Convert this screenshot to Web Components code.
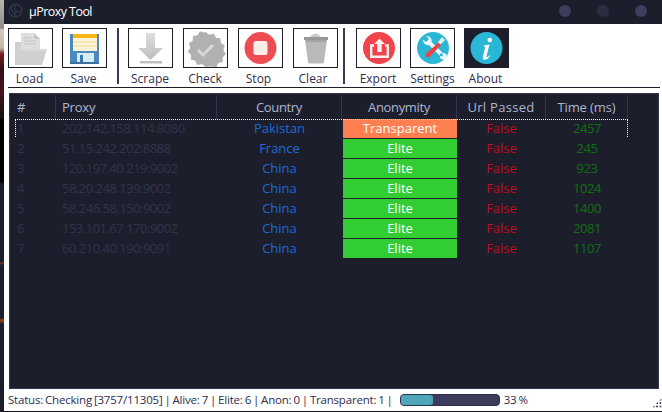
<!DOCTYPE html>
<html lang="en"><head><meta charset="utf-8"><title>µProxy Tool</title>
<style>
html,body{margin:0;padding:0;width:662px;height:412px;overflow:hidden;background:#1c1e2c;font-family:"Open Sans","Noto Sans",sans-serif}
</style></head><body>
<proxy-app></proxy-app>
<script>
const ICONS={
load:`<path d="M13 5h13l6 6v12H13z" fill="#dedede"/><path d="M26 5v6h6z" fill="#c6c6c6"/><path d="M16 10h7M16 13h12M16 16h12" stroke="#c4c4c4"/><path d="M7 37V14h6v7h26l-5 16z" fill="#cfcfcf"/><path d="M12 21h27l-1 2H12z" fill="#d9d9d9"/>`,
save:`<path d="M8 6h29v29l-1 1H8z" fill="#4d88bf"/><path d="M11 6h24v4H11z" fill="#f4b518"/><path d="M11 10h24v13H11z" fill="#faf3dc"/><path d="M11 14h24M11 18h24" stroke="#f6d77e"/><path d="M15 25h17v11H15z" fill="#d5eef2"/><path d="M18 27h3v7h-3z" fill="#3a78b4"/><path d="M8 34h29v2H8z" fill="#3d6fa3"/>`,
scrape:`<defs><linearGradient id="g" x1="0" y1="0" x2="0" y2="1"><stop offset="0" stop-color="#dedede"/><stop offset="1" stop-color="#bdbdbd"/></linearGradient></defs><path d="M18 5h9v15h8L22.500 32 10 20h8z" fill="url(#g)"/><path d="M12 33h22v2.500H12z" fill="#bfbfbf"/>`,
check:`<path d="M22.500 4l3.800 2.800 4.500-1.200 2.200 4.100 4.600.7.300 4.700 3.900 2.600-1.500 4.400 2.500 4-3.300 3.300.3 4.600-4.500 1.100-2 4.200-4.600-.9L22.500 39l-3.600-3-4.600.9-2-4.200-4.500-1.100.3-4.600-3.300-3.300 2.500-4-1.500-4.400 3.900-2.600.3-4.700 4.600-.7 2.200-4.100 4.500 1.200z" fill="#b1b1b1"/><path d="M15 22l5 5 10-10" fill="none" stroke="#d9d9d9" stroke-width="3"/>`,
stop:`<circle cx="22.500" cy="20" r="16" fill="#ec4c52"/><rect x="15.500" y="13" width="14" height="14" rx="2.500" fill="#fcecec"/>`,
clear:`<path d="M19 7q3.500-3 7 0l3 3H16z" fill="#c9c9c9"/><path d="M11 9h24v3H11z" fill="#979797"/><path d="M12 12h22l-3 22q-.3 1.500-2 1.500H17q-1.700 0-2-1.500z" fill="#b9b9b9"/><path d="M13 12h20l-.3 2H13.300z" fill="#a3a3a3"/>`,
export:`<circle cx="23" cy="20" r="16" fill="#ef444b"/><path d="M23.500 10.500l5.500 5.500h-3.300v8h-4.400v-8H18z" fill="#fdeeee"/><path d="M18 17.500h-2.800v11.300h16.600V17.500H29" fill="none" stroke="#fdeeee" stroke-width="2.400"/>`,
settings:`<circle cx="23" cy="20" r="16" fill="#2ab7d6"/><path d="M13 11.500a5 5 0 0 0 6 5.500L30 28a3.300 3.300 0 1 0 3-3L21.500 14a5 5 0 0 0-5.500-6l3 3-3 3z" fill="#eef6f8"/><circle cx="31.300" cy="26.800" r="1.600" fill="#2ab7d6"/><path d="M32 9l3 3-5 5-2.500-2z" fill="#e8eef0"/><path d="M28.500 14.500l2.500 2.500-11 11.500q-2 1.800-3.700.2-1.500-1.800.4-3.700z" fill="#ec4349"/>`,
about:`<circle cx="22.500" cy="20" r="16" fill="#2ab7d6"/><circle cx="25.800" cy="12" r="2.300" fill="#fff"/><path d="M20 17.500l5.500-1-3 11.500q-.3 1.400.7 1.200 1-.3 2.300-1.900l.7.500q-2.500 3.700-5 4-3 .2-2.300-3l2.200-9.200q.2-1.200-1.800-1z" fill="#fff"/>`
};
function def(name,css,html){
  customElements.define(name,class extends HTMLElement{
    constructor(){super();const r=this.attachShadow({mode:'open'});r.innerHTML=`<style>${css}</style>${typeof html==='function'?html(this):html}`;}
  });
}
def('title-bar',`:host{display:flex;align-items:center;height:24px;background:#1c1e2c;color:#fff;box-sizing:border-box;padding-left:4px;font-size:12.500px}
svg{flex:none;width:15px;height:15px;margin:0 6px 3px 0}
.t{flex:1;letter-spacing:-.55px;margin-bottom:2px}
i{flex:none;width:12px;height:12px;border-radius:50%;background:#3d3d5c;margin:0 26px 2px 0}
i.m{background:#2c2c42}i:last-child{margin-right:15px}`,
`<svg viewBox="0 0 16 16" fill="none" stroke="#34364a" stroke-width="1.300"><circle cx="8" cy="8" r="6.800"/><path d="M4 3c-1 4 1 8 5 9.500M8 2c-2 3-1 6 1 7s5 0 5.500-2M7 14c0-3 1-4 2-5"/></svg><span class="t">µProxy Tool</span><i></i><i class="m"></i><i></i>`);
def('tool-button',`:host{display:flex;flex-direction:column;align-items:center;width:45px;flex:none;color:#2e2e4e;font-size:12px;line-height:16px}
.b{box-sizing:border-box;width:45px;height:40px;border:1px solid #1c1e2c;background:#fff}
:host([active]) .b{background:#1c1e2c}
svg{display:block;width:45px;height:40px;margin:-1px}
.l{margin-top:3px;white-space:nowrap;padding-right:var(--nudge,0)}`,
h=>`<div class="b"><svg viewBox="0 0 45 40">${ICONS[h.getAttribute('icon')]}</svg></div><div class="l"><slot></slot></div>`);
def('tool-sep',`:host{display:block;flex:none;width:2px;height:56px;background:#3a3a55}`,'');
def('tool-bar',`:host{display:flex;align-items:flex-start;box-sizing:border-box;height:63px;padding:4px 4px 0 4px;background:#fff}`,`<slot></slot>`);
def('grid-row',`:host{display:grid;grid-template-columns:41px 161px 125px 115px 89px 82px;height:19px;margin-bottom:1px;line-height:19px;font-size:13px;text-align:center;position:relative}
.a{text-align:left;padding-left:2px;color:#32344a}
.p{text-align:left;padding-left:6px;color:#32344a;white-space:nowrap;letter-spacing:-.5px}
.c{color:#1f69d6}
.an{margin-left:1px;color:#fff;background:#32cd32}
:host([kind=Transparent]) .an{background:#ff7f50}
.f{color:#c00d1e}.ms{color:#107010;letter-spacing:-.4px}
.o{display:none}
:host([focus]) .o{display:block;position:absolute;left:0;top:0;width:611px;height:17px;border:1px dotted #fff;border-bottom:0;pointer-events:none}`,
h=>{const g=k=>h.getAttribute(k);return `<div class="a">${g('n')}</div><div class="p">${g('proxy')}</div><div class="c">${g('country')}</div><div class="an">${g('kind')}</div><div class="f">False</div><div class="ms">${g('ms')}</div><div class="o"></div>`});
def('proxy-grid',`:host{display:block;box-sizing:border-box;margin:5px 3px 0 5px;height:296px;background:#1c1e2c;border:1px solid #34364e;padding:1px 0 0 5px;overflow:hidden}
.h{display:grid;grid-template-columns:41px 161px 125px 115px 89px 82px;height:24px;line-height:24px;font-size:13px;color:#aeb6cf;text-align:center}
.h div{border-right:1px solid #34364e;box-sizing:border-box;white-space:nowrap}
.h .a{text-align:left;padding-left:2px}.h .p{text-align:left;padding-left:6px;letter-spacing:-.2px}`,
`<div class="h"><div class="a">#</div><div class="p">Proxy</div><div style="letter-spacing:-.35px">Country</div><div style="letter-spacing:-.35px">Anonymity</div><div style="letter-spacing:.3px">Url Passed</div><div style="letter-spacing:-.1px">Time (ms)</div></div><div><slot></slot></div>`);
def('status-bar',`:host{display:flex;align-items:center;box-sizing:border-box;height:22px;padding:0 0 2px 4px;background:#fff;color:#2e2e4e;font-size:11.500px;position:relative;white-space:nowrap;letter-spacing:-.2px;word-spacing:-.8px}
.bar{flex:none;box-sizing:border-box;width:100px;height:12px;margin:0 4px 0 7px;background:#3c3c5a;border-radius:4px;border:1px solid #2e2e4e;position:relative;top:1px}
.fill{width:32px;height:10px;background:#4ea6b8;border-radius:3px}
.grip{position:absolute;right:0;bottom:3px;width:10px;height:10px;background-image:radial-gradient(circle,#34364e 1.100px,transparent 1.300px);background-size:3.400px 3.400px;clip-path:polygon(100% 0,100% 100%,0 100%)}`,
`<span><slot></slot></span><div class="bar"><div class="fill"></div></div><span>33 %</span><div class="grip"></div>`);
def('proxy-rule',`:host{display:block;height:1px;background:#1c1e2c;margin:0 2px 0 4px}`,'');
def('window-base',`:host{display:block;height:2px;background:#14151f}`,'');
def('proxy-window',`:host{display:block;flex:1;min-width:0;height:412px;background:#fff}`,`<slot></slot>`);
def('proxy-app',`:host{display:flex;width:662px;height:412px;overflow:hidden}
.desk{flex:none;width:4px;height:412px;background:linear-gradient(#b8b4b0 0,#8f8b88 28px,#d8c8c0 30px,#c9b7a8 48px,#7a1c1c 54px,#301018 70px,#4a1418 90px,#181014 118px,#000 120px,#000 182px,#1c1e2c 184px,#1c1e2c 262px,#7a3a20 263px,#1c1e2c 265px,#1c1e2c 318px,#a04a20 320px,#1c1e2c 324px,#1c1e2c 412px)}`,
`<div class="desk"></div><proxy-window>
<title-bar></title-bar>
<tool-bar>
 <tool-button icon="load" style="--nudge:2px">Load</tool-button>
 <tool-button icon="save" style="margin-left:9px;--nudge:2px">Save</tool-button>
 <tool-sep style="margin-left:10px"></tool-sep>
 <tool-button icon="scrape" style="margin-left:9px;--nudge:1px">Scrape</tool-button>
 <tool-button icon="check" style="margin-left:10px;--nudge:1px">Check</tool-button>
 <tool-button icon="stop" style="margin-left:10px;--nudge:4px">Stop</tool-button>
 <tool-button icon="clear" style="margin-left:10px;--nudge:5px">Clear</tool-button>
 <tool-sep style="margin-left:5px"></tool-sep>
 <tool-button icon="export" style="margin-left:11px;--nudge:1px">Export</tool-button>
 <tool-button icon="settings" style="margin-left:9px">Settings</tool-button>
 <tool-button icon="about" active style="margin-left:9px;--nudge:2px">About</tool-button>
</tool-bar>
<proxy-rule></proxy-rule>
<proxy-grid>
 <grid-row focus n="1" proxy="202.142.158.114:8080" country="Pakistan" kind="Transparent" ms="2457"></grid-row>
 <grid-row n="2" proxy="51.15.242.202:8888" country="France" kind="Elite" ms="245"></grid-row>
 <grid-row n="3" proxy="120.197.40.219:9002" country="China" kind="Elite" ms="923"></grid-row>
 <grid-row n="4" proxy="58.20.248.139:9002" country="China" kind="Elite" ms="1024"></grid-row>
 <grid-row n="5" proxy="58.246.58.150:9002" country="China" kind="Elite" ms="1400"></grid-row>
 <grid-row n="6" proxy="153.101.67.170:9002" country="China" kind="Elite" ms="2081"></grid-row>
 <grid-row n="7" proxy="60.210.40.190:9091" country="China" kind="Elite" ms="1107"></grid-row>
</proxy-grid>
<status-bar>Status: Checking [3757/11305] | Alive: 7 | Elite: 6 | Anon: 0 | Transparent: 1 |</status-bar>
<window-base></window-base>
</proxy-window>`);
</script>
</body></html>
